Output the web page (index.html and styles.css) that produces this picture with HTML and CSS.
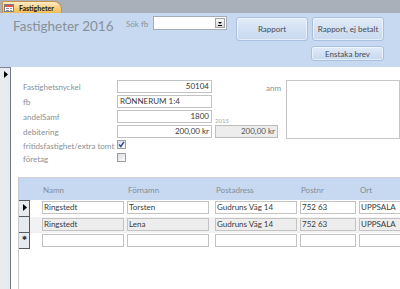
FILE: index.html
```html
<!DOCTYPE html>
<html lang="sv">
<head>
<meta charset="utf-8">
<title>Fastigheter</title>
<link rel="stylesheet" href="styles.css">
</head>
<body>
<div class="tabstrip">
  <div class="tab">
    <svg class="tab-icon" width="10" height="8" viewBox="0 0 10 8">
      <rect x="0.5" y="0.5" width="9" height="7" fill="#fff" stroke="#7a7f8a"/>
      <rect x="1" y="1" width="8" height="2" fill="#d9534f"/>
      <rect x="2" y="4" width="3" height="1" fill="#8a93a3"/>
      <rect x="6" y="4" width="2" height="1" fill="#8a93a3"/>
      <rect x="2" y="6" width="3" height="1" fill="#8a93a3"/>
      <rect x="6" y="6" width="2" height="1" fill="#8a93a3"/>
    </svg>
    <span>Fastigheter</span>
  </div>
</div>
<header class="header">
  <h1 class="title">Fastigheter 2016</h1>
  <div class="search">
    <span class="search-label">Sök fb</span>
    <div class="combo">
      <span class="drop">
        <svg width="8" height="8" viewBox="0 0 8 8"><path d="M2 3h4L4 5z" fill="#000"/><rect x="2" y="6" width="4" height="1" fill="#000"/></svg>
      </span>
    </div>
  </div>
  <div class="buttons">
    <button class="btn">Rapport</button>
    <button class="btn">Rapport, ej betalt</button>
    <button class="btn btn-small">Enstaka brev</button>
  </div>
</header>
<div class="main">
  <div class="selector">
    <svg class="sel-arrow" width="4" height="7" viewBox="0 0 4 7"><path d="M0 0L4 3.5L0 7z" fill="#000"/></svg>
  </div>
  <div class="content">
    <div class="form">
      <span class="label r1">Fastighetsnyckel</span>
      <div class="box num r1">50104</div>
      <span class="label anm-label">anm</span>
      <div class="anm-box"></div>

      <span class="label r2">fb</span>
      <div class="box r2">RÖNNERUM 1:4</div>

      <span class="label r3">andelSamf</span>
      <div class="box num r3">1800</div>
      <span class="year">2015</span>

      <span class="label r4">debitering</span>
      <div class="box num r4">200,00 kr</div>
      <div class="box num grey-box">200,00 kr</div>

      <span class="label r5">fritidsfastighet/extra tomt</span>
      <span class="check r5 checked">
        <svg width="7" height="7" viewBox="0 0 7 7"><path d="M1 3.5L2.8 5.5L6 0.8" fill="none" stroke="#2a4f9c" stroke-width="1.4"/></svg>
      </span>

      <span class="label r6">företag</span>
      <span class="check r6"></span>
    </div>

    <div class="subform">
      <div class="sf-head">
        <span class="sf-sel-space"></span>
        <span class="hcell c1">Namn</span>
        <span class="hcell c2">Förnamn</span>
        <span class="hcell c3">Postadress</span>
        <span class="hcell c4">Postnr</span>
        <span class="hcell c5">Ort</span>
      </div>
      <div class="sf-row first">
        <span class="rsel">
          <svg width="4" height="7" viewBox="0 0 4 7"><path d="M0 0L4 3.5L0 7z" fill="#000"/></svg>
        </span>
        <span class="cell c1">Ringstedt</span>
        <span class="cell c2">Torsten</span>
        <span class="cell c3">Gudruns Väg 14</span>
        <span class="cell c4">752 63</span>
        <span class="cell c5">UPPSALA</span>
      </div>
      <div class="sf-row alt">
        <span class="rsel"></span>
        <span class="cell c1">Ringstedt</span>
        <span class="cell c2">Lena</span>
        <span class="cell c3">Gudruns Väg 14</span>
        <span class="cell c4">752 63</span>
        <span class="cell c5">UPPSALA</span>
      </div>
      <div class="sf-row">
        <span class="rsel new">✱</span>
        <span class="cell c1"></span>
        <span class="cell c2"></span>
        <span class="cell c3"></span>
        <span class="cell c4"></span>
        <span class="cell c5"></span>
      </div>
    </div>
  </div>
</div>
</body>
</html>
```
FILE: styles.css
```css
* { box-sizing: border-box; }
html, body { margin: 0; padding: 0; }
body {
  width: 400px;
  height: 289px;
  overflow: hidden;
  background: #fff;
  font-family: Lato, "Open Sans", sans-serif;
  color: #333;
}

/* tab strip */
.tabstrip {
  height: 13px;
  background: #a9b0b9;
  display: flex;
  align-items: flex-end;
  padding-left: 2px;
}
.tab {
  height: 12px;
  display: flex;
  align-items: center;
  gap: 5px;
  padding: 0 7px 0 1px;
  background: linear-gradient(#fdeec9, #f8cb73 60%, #f3bb55);
  border: 1px solid #c9924a;
  border-bottom: none;
  border-radius: 2px 8px 0 0;
  font-size: 7px;
  font-weight: bold;
  color: #1e1e1e;
}
.tab-icon { display: block; }

/* header */
.header {
  height: 54px;
  background: #c6d9f1;
  display: flex;
  align-items: flex-start;
}
.title {
  margin: 5px 0 0 13px;
  width: 113px;
  flex: none;
  font-size: 13.5px;
  line-height: 16px;
  font-weight: normal;
  color: #8a9098;
  white-space: nowrap;
}
.search {
  display: flex;
  margin-top: 3px;
}
.search-label {
  width: 27px;
  padding-top: 3px;
  font-size: 8px;
  color: #8f949a;
}
.combo {
  width: 74px;
  height: 14px;
  background: #fff;
  border: 1px solid #a7adb5;
  display: flex;
  justify-content: flex-end;
  padding: 1px;
}
.drop {
  width: 10px;
  height: 10px;
  border: 1px solid #9ea3aa;
  background: linear-gradient(#f7f7f7, #d9d9d9);
  display: flex;
  align-items: center;
  justify-content: center;
}
.drop svg { display: block; }

.buttons {
  margin: 4px 0 0 9px;
  display: grid;
  grid-template-columns: 72px 72px;
  column-gap: 4px;
  row-gap: 5px;
}
.btn {
  height: 24px;
  padding: 0;
  font-family: inherit;
  font-size: 8px;
  color: #454c56;
  background: linear-gradient(#e3ecf8, #d3e1f3 50%, #c8d9ef);
  border: 1px solid #a9c1df;
  border-radius: 3px;
  box-shadow: inset 0 0 0 1px rgba(255,255,255,0.5);
}
.btn-small {
  grid-column: 2;
  height: 15px;
  width: 73px;
  margin-left: -1px;
}

/* main */
.main {
  display: flex;
  height: 222px;
}
.selector {
  width: 11px;
  flex: none;
  background: #e8ecf1;
  border-top: 1px solid #7c8591;
  border-right: 1px solid #6f7885;
  padding: 3px 0 0 4px;
}
.sel-arrow { display: block; }
.content {
  flex: 1;
  padding-top: 13px;
  display: flex;
  flex-direction: column;
  min-height: 0;
}

.form {
  margin-left: 12px;
  display: grid;
  grid-template-columns: 94px 95px 3px 50px 13px 8px 114px;
  grid-template-rows: 13px 13px 13px 13px 11px 11px;
  row-gap: 2px;
}
.label {
  grid-column: 1;
  align-self: center;
  font-size: 8px;
  color: #8a8f96;
  white-space: nowrap;
}
.r1 { grid-row: 1; }
.r2 { grid-row: 2; }
.r3 { grid-row: 3; }
.r4 { grid-row: 4; }
.r5 { grid-row: 5; }
.r6 { grid-row: 6; }
.box {
  grid-column: 2;
  border: 1px solid #c2c2c2;
  background: #fff;
  font-size: 8px;
  color: #3a3a3a;
  padding: 0 2px;
  line-height: 11px;
  white-space: nowrap;
}
.num { text-align: right; }
.grey-box {
  grid-row: 4;
  grid-column: 4 / span 2;
  background: #ededed;
  border-color: #bdbdbd;
  color: #555;
}
.year {
  grid-row: 3;
  grid-column: 4;
  align-self: end;
  font-size: 6px;
  color: #a8a8a8;
  line-height: 6px;
  margin-bottom: -1px;
}
.anm-label {
  grid-row: 1;
  grid-column: 5 / span 2;
  align-self: start;
  padding: 3px 0 0 1px;
}
.anm-box {
  grid-row: 1 / span 5;
  grid-column: 7;
  align-self: start;
  height: 59px;
  border: 1px solid #c6c6c6;
  background: #fff;
}
.check {
  grid-column: 2;
  align-self: start;
  width: 9px;
  height: 9px;
  border: 1px solid #9c9fa4;
  background: linear-gradient(135deg, #dcdde0, #fafafa);
  display: flex;
  align-items: center;
  justify-content: center;
}
.check svg { display: block; }

/* subform */
.subform {
  margin: 13px 0 0 7px;
  flex: 1;
  min-height: 0;
  overflow: hidden;
  border-top: 1px solid #d2d2d2;
  border-left: 1px solid #c9c9c9;
}
.sf-head {
  height: 22px;
  background: #c6d9f1;
  display: flex;
  align-items: center;
}
.sf-sel-space { width: 11px; flex: none; }
.hcell {
  font-size: 8px;
  color: #868c94;
  padding-left: 1px;
  padding-top: 1px;
}
.c1 { width: 82px; margin-left: 12px; flex: none; }
.c2 { width: 82px; margin-left: 3px; flex: none; }
.c3 { width: 82px; margin-left: 6px; flex: none; }
.c4 { width: 56px; margin-left: 3px; flex: none; }
.c5 { width: 60px; margin-left: 3px; flex: none; }

.sf-row {
  height: 16px;
  display: flex;
  align-items: flex-start;
}
.sf-row.first { height: 17px; }
.sf-row.alt { background: #f2f2f2; }
.rsel {
  margin-left: -1px;
  width: 12px;
  height: 16px;
  flex: none;
  background: #e7eaee;
  border: 1px solid #555a60;
  border-top: none;
  display: flex;
  justify-content: center;
  padding-top: 3px;
  padding-left: 1px;
}
.first .rsel { height: 17px; border-top: 1px solid #555a60; }
.rsel svg { display: block; }
.rsel.new {
  font-size: 6px;
  line-height: 6px;
  color: #333;
  padding-top: 2px;
}
.cell {
  height: 13px;
  margin-top: 1px;
  border: 1px solid #c3c3c3;
  background: #fff;
  font-size: 8px;
  line-height: 11px;
  color: #3a3a3a;
  padding-left: 1px;
  white-space: nowrap;
}
.alt .cell { background: #ededed; }
```
